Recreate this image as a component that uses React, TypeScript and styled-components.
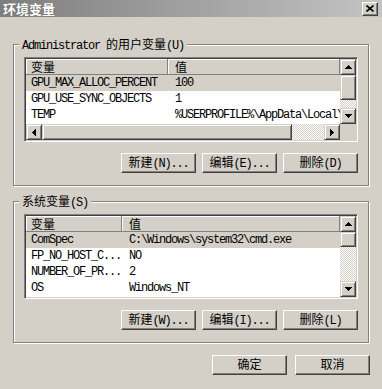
import styled, { createGlobalStyle } from 'styled-components';

const GlobalStyle = createGlobalStyle`
  html, body {
    margin: 0;
    padding: 0;
    background: #d4d0c8;
  }
  body {
    width: 382px;
    height: 389px;
    overflow: hidden;
  }
`;

const Window = styled.div`
  width: 382px;
  height: 389px;
  display: flex;
  flex-direction: column;
  background: #d4d0c8;
  color: #000;
  font-family: "Liberation Mono", "Noto Sans CJK SC", monospace;
  font-size: 12px;
  letter-spacing: -1.2px;
`;

const Han = styled.span`
  font-family: "Noto Sans CJK SC", sans-serif;
  letter-spacing: 0;
`;

const TitleBar = styled.div`
  height: 17px;
  flex: none;
  display: flex;
  align-items: center;
  justify-content: space-between;
  padding: 0 4px 0 3px;
  background: linear-gradient(to right, #7e7e7e, #c4c4c4);
`;

const TitleText = styled.span`
  font-family: "Noto Sans CJK SC", sans-serif;
  font-weight: 700;
  font-size: 13px;
  line-height: 17px;
  letter-spacing: 0;
  color: #fff;
  text-shadow: 0 0 1px #555;
`;

const CloseButton = styled.div`
  width: 16px;
  height: 14px;
  box-sizing: border-box;
  display: flex;
  align-items: center;
  justify-content: center;
  background: #d4d0c8;
  border: 1px solid;
  border-color: #fff #404040 #404040 #fff;
  box-shadow: inset -1px -1px 0 #808080;
`;

const Body = styled.div`
  flex: 1;
  display: flex;
  flex-direction: column;
  padding: 21px 13px 0 13px;
`;

const Group = styled.fieldset`
  margin: 0;
  min-width: 0;
  padding: 7px 10px 12px;
  border: 1px solid #808080;
  box-shadow: 1px 1px 0 #fff, inset 1px 1px 0 #fff;
  display: flex;
  flex-direction: column;
  gap: 11px;

  & + & {
    margin-top: 9px;
  }
`;

const Legend = styled.legend`
  margin-left: -5px;
  padding: 0 3px;
  height: 12px;
  line-height: 12px;
  background: #d4d0c8;
  white-space: nowrap;
`;

const ListView = styled.div<{ $hscroll?: boolean }>`
  height: 85px;
  box-sizing: border-box;
  padding: 1px;
  border: 1px solid;
  border-color: #808080 #fff #fff #808080;
  box-shadow: inset 1px 1px 0 #404040, inset -1px -1px 0 #d4d0c8;
  background: #fff;
  display: grid;
  grid-template-columns: minmax(0, 1fr) 16px;
  grid-template-rows: ${(p) => (p.$hscroll ? 'minmax(0, 1fr) 16px' : 'minmax(0, 1fr)')};
`;

const ListArea = styled.div`
  overflow: hidden;
  background: #fff;
`;

const Columns = styled.div<{ $first: number }>`
  display: grid;
  grid-template-columns: ${(p) => p.$first}px minmax(0, 1fr);
`;

const HeaderRow = styled(Columns)`
  height: 16px;
`;

const HeaderCell = styled.div`
  height: 16px;
  box-sizing: border-box;
  padding-left: 7px;
  font-family: "Noto Sans CJK SC", sans-serif;
  letter-spacing: 0;
  line-height: 15px;
  background: #d4d0c8;
  border-right: 1px solid #808080;
  border-bottom: 1px solid #808080;
  box-shadow: inset 1px 1px 0 #fff;
  white-space: nowrap;

  &:first-child {
    padding-left: 5px;
  }
`;

const Row = styled(Columns)<{ $selected?: boolean }>`
  height: 16px;
  line-height: 16px;
  background: ${(p) => (p.$selected ? '#d4d0c8' : '#fff')};
`;

const Cell = styled.div`
  padding-left: 7px;
  white-space: nowrap;
  overflow: hidden;

  &:first-child {
    padding-left: 5px;
  }
`;

const dither = `
  background-color: #d4d0c8;
  background-image: repeating-conic-gradient(#fff 0 25%, #d4d0c8 0 50%);
  background-size: 2px 2px;
`;

const VScroll = styled.div`
  display: flex;
  flex-direction: column;
  justify-content: space-between;
  ${dither}
`;

const HScroll = styled.div`
  display: flex;
  ${dither}
`;

const raised = `
  box-sizing: border-box;
  background: #d4d0c8;
  border: 1px solid;
  border-color: #d4d0c8 #404040 #404040 #d4d0c8;
  box-shadow: inset 1px 1px 0 #fff, inset -1px -1px 0 #808080;
`;

const ArrowButton = styled.div`
  width: 16px;
  height: 16px;
  flex: none;
  display: flex;
  align-items: center;
  justify-content: center;
  ${raised}
`;

const Thumb = styled.div<{ $size: number; $vertical?: boolean }>`
  flex: none;
  ${raised}
  ${(p) => (p.$vertical ? `height: ${p.$size}px;` : `width: ${p.$size}px;`)}
`;

const Track = styled.div`
  flex: 1;
`;

const Corner = styled.div`
  background: #d4d0c8;
`;

const ButtonRow = styled.div<{ $gap: number; $outset?: number }>`
  display: flex;
  justify-content: flex-end;
  gap: ${(p) => p.$gap}px;
  margin-right: ${(p) => -(p.$outset ?? 0)}px;
`;

const Button = styled.button`
  width: 75px;
  height: 20px;
  box-sizing: border-box;
  padding: 0;
  font: inherit;
  letter-spacing: inherit;
  line-height: 16px;
  color: #000;
  background: #d4d0c8;
  border: 1px solid;
  border-color: #fff #404040 #404040 #fff;
  box-shadow: inset -1px -1px 0 #808080;
`;

const DialogButtons = styled(ButtonRow)`
  margin-top: 12px;
`;

type Dir = 'up' | 'down' | 'left' | 'right';

const arrowPaths: Record<Dir, string> = {
  up: 'M3 0h1v1h1v1h1v1h1v1H0V3h1V2h1V1h1z',
  down: 'M0 0h7v1H6v1H5v1H4v1H3V3H2V2H1V1H0z',
  left: 'M3 0h1v7H3V6H2V5H1V4H0V3h1V2h1V1h1z',
  right: 'M0 0h1v1h1v1h1v1h1v1H3v1H2v1H1v1H0z',
};

const Arrow = ({ dir }: { dir: Dir }) => {
  const vertical = dir === 'up' || dir === 'down';
  return (
    <ArrowButton>
      <svg width={vertical ? 7 : 4} height={vertical ? 4 : 7} shapeRendering="crispEdges">
        <path d={arrowPaths[dir]} fill="#000" />
      </svg>
    </ArrowButton>
  );
};

interface Variable {
  name: string;
  value: string;
}

interface VariableListProps {
  first: number;
  rows: Variable[];
  thumb: number;
  hscroll?: boolean;
}

const VariableList = ({ first, rows, thumb, hscroll }: VariableListProps) => {
  return (
    <ListView $hscroll={hscroll}>
      <ListArea>
        <HeaderRow $first={first}>
          <HeaderCell>变量</HeaderCell>
          <HeaderCell>值</HeaderCell>
        </HeaderRow>
        {rows.map((row, i) => (
          <Row key={row.name} $first={first} $selected={i === 0}>
            <Cell>{row.name}</Cell>
            <Cell>{row.value}</Cell>
          </Row>
        ))}
      </ListArea>
      <VScroll>
        <Arrow dir="up" />
        <Thumb $vertical $size={thumb} />
        <Track />
        <Arrow dir="down" />
      </VScroll>
      {hscroll && (
        <>
          <HScroll>
            <Arrow dir="left" />
            <Thumb $size={250} />
            <Track />
            <Arrow dir="right" />
          </HScroll>
          <Corner />
        </>
      )}
    </ListView>
  );
};

const userVars: Variable[] = [
  { name: 'GPU_MAX_ALLOC_PERCENT', value: '100' },
  { name: 'GPU_USE_SYNC_OBJECTS', value: '1' },
  { name: 'TEMP', value: '%USERPROFILE%\\AppData\\Local\\Temp' },
];

const systemVars: Variable[] = [
  { name: 'ComSpec', value: 'C:\\Windows\\system32\\cmd.exe' },
  { name: 'FP_NO_HOST_C...', value: 'NO' },
  { name: 'NUMBER_OF_PR...', value: '2' },
  { name: 'OS', value: 'Windows_NT' },
];

const App = () => {
  return (
    <Window>
      <GlobalStyle />
      <TitleBar>
        <TitleText>环境变量</TitleText>
        <CloseButton>
          <svg width="8" height="7" viewBox="0 0 8 7">
            <path d="M0.5 0.5L7.5 6.5M7.5 0.5L0.5 6.5" stroke="#000" strokeWidth="1.6" />
          </svg>
        </CloseButton>
      </TitleBar>
      <Body>
        <Group>
          <Legend>
            Administrator <Han>的用户变量</Han>(U)
          </Legend>
          <VariableList first={142} rows={userVars} thumb={25} hscroll />
          <ButtonRow $gap={6}>
            <Button>
              <Han>新建</Han>(N)...
            </Button>
            <Button>
              <Han>编辑</Han>(E)...
            </Button>
            <Button>
              <Han>删除</Han>(D)
            </Button>
          </ButtonRow>
        </Group>
        <Group>
          <Legend>
            <Han>系统变量</Han>(S)
          </Legend>
          <VariableList first={96} rows={systemVars} thumb={15} />
          <ButtonRow $gap={6}>
            <Button>
              <Han>新建</Han>(W)...
            </Button>
            <Button>
              <Han>编辑</Han>(I)...
            </Button>
            <Button>
              <Han>删除</Han>(L)
            </Button>
          </ButtonRow>
        </Group>
        <DialogButtons $gap={8} $outset={1}>
          <Button>
            <Han>确定</Han>
          </Button>
          <Button>
            <Han>取消</Han>
          </Button>
        </DialogButtons>
      </Body>
    </Window>
  );
};

export default App;
